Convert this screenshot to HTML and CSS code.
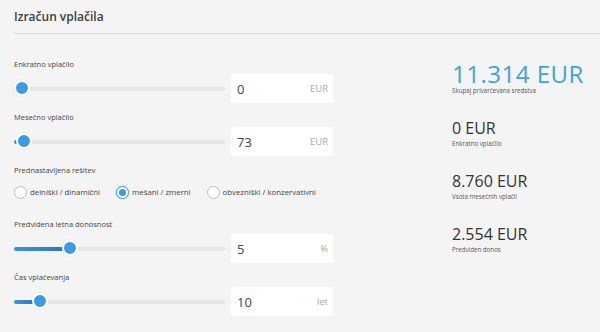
FILE: index.html
```html
<!DOCTYPE html>
<html lang="sl">

<head>
  <meta charset="UTF-8">
  <meta name="viewport" content="width=device-width, initial-scale=1.0">
  <title>Izračun vplačila</title>
  <link rel="stylesheet" href="styles.css">
</head>

<body>
  <div class="header">
    <h1>Izračun vplačila</h1>
  </div>

  <div class="calc">
    <div class="inputs">
      <div class="field">
        <label class="field-label">Enkratno vplačilo</label>
        <div class="field-row">
          <div class="slider">
            <div class="track"></div>
            <div class="fill" style="width: calc(0% + 8px);"></div>
            <div class="thumb" style="left: calc(0 * (100% - 16px));"></div>
          </div>
          <div class="value-box">
            <span class="value">0</span>
            <span class="unit">EUR</span>
          </div>
        </div>
      </div>

      <div class="field">
        <label class="field-label">Mesečno vplačilo</label>
        <div class="field-row">
          <div class="slider">
            <div class="track"></div>
            <div class="fill" style="width: calc(0.01 * (100% - 16px) + 8px);"></div>
            <div class="thumb" style="left: calc(0.01 * (100% - 16px));"></div>
          </div>
          <div class="value-box">
            <span class="value">73</span>
            <span class="unit">EUR</span>
          </div>
        </div>
      </div>

      <div class="field radios-field">
        <label class="field-label">Prednastavljena rešitev</label>
        <div class="radios">
          <label class="radio"><span class="dot"></span>delniški / dinamični</label>
          <label class="radio checked"><span class="dot"></span>mešani / zmerni</label>
          <label class="radio"><span class="dot"></span>obvezniški / konzervativni</label>
        </div>
      </div>

      <div class="field">
        <label class="field-label">Predvidena letna donosnost</label>
        <div class="field-row">
          <div class="slider">
            <div class="track"></div>
            <div class="fill" style="width: calc(0.246 * (100% - 16px) + 8px);"></div>
            <div class="thumb" style="left: calc(0.246 * (100% - 16px));"></div>
          </div>
          <div class="value-box">
            <span class="value">5</span>
            <span class="unit">%</span>
          </div>
        </div>
      </div>

      <div class="field">
        <label class="field-label">Čas vplačevanja</label>
        <div class="field-row">
          <div class="slider">
            <div class="track"></div>
            <div class="fill" style="width: calc(0.092 * (100% - 16px) + 8px);"></div>
            <div class="thumb" style="left: calc(0.092 * (100% - 16px));"></div>
          </div>
          <div class="value-box">
            <span class="value">10</span>
            <span class="unit">let</span>
          </div>
        </div>
      </div>
    </div>

    <div class="results">
      <div class="result main">
        <div class="amount">11.314 EUR</div>
        <div class="caption">Skupaj privarčevana sredstva</div>
      </div>
      <div class="result">
        <div class="amount">0 EUR</div>
        <div class="caption">Enkratno vplačilo</div>
      </div>
      <div class="result">
        <div class="amount">8.760 EUR</div>
        <div class="caption">Vsota mesečnih vplačil</div>
      </div>
      <div class="result">
        <div class="amount">2.554 EUR</div>
        <div class="caption">Predviden donos</div>
      </div>
    </div>
  </div>
</body>

</html>
```

FILE: styles.css
```css
body {
  font-family: "Open Sans", "Noto Sans", sans-serif;
  margin: 0;
  padding: 0 0 0 14px;
  background: #f4f4f4;
  color: #333;
  min-height: 100vh;
}

.header {
  height: 33px;
  border-bottom: 1px solid #d9d9d9;
  display: flex;
  align-items: center;
}

.header h1 {
  margin: 0;
  font-size: 12px;
  font-weight: 600;
  color: #3d3d3d;
}

.calc {
  display: grid;
  grid-template-columns: 319px 1fr;
  column-gap: 119px;
  padding-top: 25px;
}

.inputs {
  display: flex;
  flex-direction: column;
  gap: 9px;
}

.field {
  display: flex;
  flex-direction: column;
  gap: 5px;
}

.field-label {
  font-size: 7.5px;
  line-height: 10px;
  color: #444;
}

.field-row {
  display: flex;
  align-items: center;
  gap: 6px;
}

.slider {
  flex: 1;
  position: relative;
  height: 16px;
}

.track {
  position: absolute;
  left: 0;
  right: 0;
  top: 6px;
  height: 4px;
  border-radius: 2px;
  background: #e6e6e6;
}

.fill {
  position: absolute;
  left: 0;
  top: 6px;
  height: 4px;
  border-radius: 2px;
  background: linear-gradient(90deg, #3b95df 0%, #2f72b6 100%);
}

.thumb {
  position: absolute;
  top: -0.5px;
  width: 12px;
  height: 12px;
  border: 2.5px solid #fff;
  border-radius: 50%;
  background: #3a9be8;
  box-shadow: 0 0 2px rgba(0, 0, 0, 0.08);
}

.value-box {
  width: 102px;
  height: 29px;
  box-sizing: border-box;
  background: #fff;
  border-radius: 3px;
  display: flex;
  align-items: center;
  justify-content: space-between;
  padding: 0 5px 0 6px;
}

.value {
  font-size: 13px;
  color: #444;
}

.unit {
  font-size: 9.5px;
  color: #aaa;
}

.radios-field {
  gap: 11px;
  padding-bottom: 11px;
}

.radios {
  display: flex;
  white-space: nowrap;
}

.radio {
  display: flex;
  align-items: center;
  flex-shrink: 0;
  gap: 3px;
  font-size: 7.8px;
  line-height: 13px;
  color: #444;
  margin-right: 16px;
}

.radio .dot {
  flex-shrink: 0;
  width: 11px;
  height: 11px;
  border: 1px solid #bdbdbd;
  border-radius: 50%;
  background: #fff;
  position: relative;
}

.radio.checked .dot {
  border-color: #3a9be8;
  box-shadow: 0 0 2px rgba(58, 155, 232, 0.5);
}

.radio.checked .dot::after {
  content: '';
  position: absolute;
  left: 2px;
  top: 2px;
  width: 7px;
  height: 7px;
  border-radius: 50%;
  background: #3a9be8;
}

.results {
  display: flex;
  flex-direction: column;
  gap: 24px;
  padding-top: 4px;
}

.result .amount {
  font-size: 16px;
  line-height: 18px;
  color: #333;
}

.result .caption {
  margin-top: 2px;
  font-size: 6.2px;
  line-height: 9px;
  color: #555;
}

.result.main .amount {
  font-size: 24px;
  line-height: 22px;
  letter-spacing: 0.5px;
  color: #3ca2e8;
}

.result.main .caption {
  margin-top: 1px;
}
```
